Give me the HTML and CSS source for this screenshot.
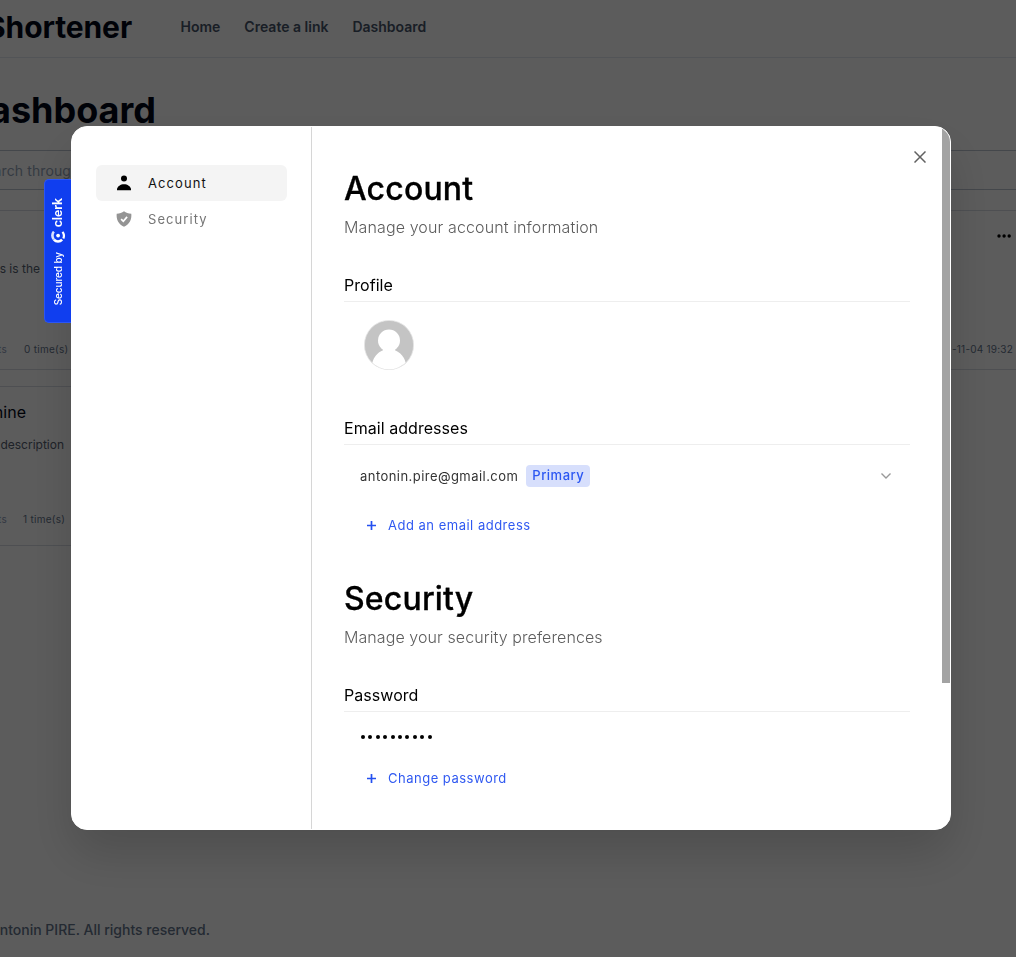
FILE: index.html
```html
<!DOCTYPE html>
<html lang="en">
<head>
<meta charset="utf-8">
<title>Dashboard - Shortener</title>
<link rel="stylesheet" href="styles.css">
</head>
<body>
<div class="page">
  <header class="topbar">
    <div class="brand">Shortener</div>
    <nav class="nav"><a>Home</a><a>Create a link</a><a>Dashboard</a></nav>
  </header>
  <main class="main">
    <h1 class="title">Dashboard</h1>
    <div class="search"><span class="to-left search-text">Search throug</span></div>
    <div class="cards">
      <article class="card">
        <div class="to-left card-title"></div>
        <div class="to-left card-desc w40">This is the</div>
        <div class="card-foot"><span class="to-left card-link">Stats</span><span class="foot-a">0 time(s)</span></div>
      </article>
      <article class="card card-right">
        <svg class="dots" width="14" height="4" viewBox="0 0 14 4"><circle cx="2" cy="2" r="1.7"/><circle cx="7.1" cy="2" r="1.7"/><circle cx="12.2" cy="2" r="1.7"/></svg>
        <div class="date">-11-04 19:32</div>
      </article>
      <article class="card">
        <div class="to-left card-title">mine</div>
        <div class="to-left card-desc w64">description</div>
        <div class="card-foot short"><span class="to-left card-link">Stats</span><span class="foot-b">1 time(s)</span></div>
      </article>
    </div>
  </main>
  <footer class="footer"><span class="to-left footer-text">Antonin PIRE. All rights reserved.</span></footer>
</div>
<div class="backdrop">
  <div class="modal">
    <div class="badge">
      <span class="badge-text">Secured by</span>
      <svg class="badge-logo" width="14" height="12" viewBox="0 0 14 12" fill="none" stroke="#fff"><path d="M2.900.7C.9 2.700.9 6.400 2.900 8.400" stroke-width="2.600" opacity=".85"/><path d="M2.900 8.600c2.200 2.500 6 2.500 8.200 0" stroke-width="2.500"/><path d="M11.500.9c1.600 2 1.700 4.600.8 6.600" stroke-width="2.200"/><circle cx="7.100" cy="4.600" r="1.900" fill="#fff" stroke="none"/></svg>
      <span class="badge-word">clerk</span>
    </div>
    <aside class="sidebar">
      <div class="side-item active">
        <svg width="16" height="16" viewBox="0 0 16 16"><circle cx="8" cy="3.600" r="3"/><path d="M1 15.300v-1.300C1.500 11.300 4.500 9.200 8 9.200s6.500 2.100 7 4.800v1.300z"/></svg>
        <span>Account</span>
      </div>
      <div class="side-item">
        <svg width="16" height="16" viewBox="0 0 16 16"><path fill="#949494" d="M8 .3c2 1.400 4.300 2.200 7.300 2.400.6 5.800-1.700 10.400-7.300 13C2.400 13.100.1 8.500.7 2.700 3.700 2.500 6 1.700 8 .3z"/><path d="M5.100 8.200l2.200 2 3.800-4.300" fill="none" stroke="#fff" stroke-width="1.700"/></svg>
        <span>Security</span>
      </div>
    </aside>
    <div class="content">
      <h2 class="heading">Account</h2>
      <p class="sub">Manage your account information</p>
      <h3 class="section">Profile</h3>
      <div class="profile">
        <svg width="50" height="50" viewBox="0 0 50 50"><defs><clipPath id="c"><circle cx="25" cy="25" r="24.300"/></clipPath></defs><circle cx="25" cy="25" r="24.600" fill="#c4c4c4" stroke="#e6e6e6" stroke-width=".8"/><g clip-path="url(#c)" fill="#fff"><ellipse cx="25" cy="20.500" rx="11" ry="10.900"/><path d="M19 28h12v2.300c5.500 2.200 9.300 6.700 10.700 12.700V50H8.300V43C9.700 37 13.500 32.500 19 30.300z"/></g></svg>
      </div>
      <h3 class="section">Email addresses</h3>
      <div class="email-row">
        <span class="email">antonin.pire@gmail.com</span><span class="tag">Primary</span>
        <svg class="chev" width="10" height="6" viewBox="0 0 10 6"><path d="M.5.6L5 5 9.500.6" fill="none" stroke="#999" stroke-width="1.400"/></svg>
      </div>
      <div class="action"><svg width="9" height="9" viewBox="0 0 9 9"><path d="M4.500 0v9M0 4.500h9" stroke="#2450f0" stroke-width="1.700"/></svg><span>Add an email address</span></div>
      <h2 class="heading second">Security</h2>
      <p class="sub sub-b">Manage your security preferences</p>
      <h3 class="section">Password</h3>
      <div class="pw"><i></i><i></i><i></i><i></i><i></i><i></i><i></i><i></i><i></i><i></i></div>
      <div class="action"><svg width="9" height="9" viewBox="0 0 9 9"><path d="M4.500 0v9M0 4.500h9" stroke="#2450f0" stroke-width="1.700"/></svg><span>Change password</span></div>
    </div>
    <div class="track"><div class="thumb"></div></div>
    <svg class="close" width="12" height="12" viewBox="0 0 12 12"><path d="M.5.5l11 11M11.500.5l-11 11" stroke="#616161" stroke-width="1.500"/></svg>
  </div>
</div>
</body>
</html>
```
FILE: styles.css
```css
* { box-sizing: border-box; }
body { margin: 0; font-family: Inter, "Liberation Sans", sans-serif; background: #fff; }
h1, h2, h3, p { margin: 0; }
.page { width: 1016px; height: 957px; overflow: hidden; display: flex; flex-direction: column; color: #020817; }
.to-left, .brand, .title { display: flex; justify-content: flex-end; white-space: nowrap; }
.topbar { height: 58px; flex: none; border-bottom: 1px solid #e2e8f0; display: flex; align-items: center; padding-bottom: 3px; }
.brand { width: 132px; font-size: 30px; font-weight: 700; letter-spacing: -.1px; }
.nav { display: flex; gap: 24px; margin: 0 0 2px 48.500px; font-size: 14px; font-weight: 600; color: #475569; }
.main { flex: 1; }
.title { width: 156px; margin-top: 32px; font-size: 36px; line-height: 40px; font-weight: 700; }
.search { height: 40px; margin: 20px -10px 0; padding: 0 10px; border: 1px solid #bcc4d0; display: flex; align-items: center; }
.search-text { width: 70px; font-size: 14px; letter-spacing: .1px; color: #94a3b8; }
.cards { margin-top: 20px; display: grid; grid-template-columns: 1fr 1fr; grid-auto-rows: 160px; gap: 16px; }
.card { border: 1px solid #d8dce4; border-width: 1px 0; padding-top: 13px; }
.card-title { width: 26px; height: 24px; font-size: 16px; line-height: 24px; }
.card-desc { font-size: 12px; line-height: 16px; margin-top: 13px; color: #556070; }
.w40 { width: 40px; }
.w64 { width: 64px; }
.card-foot { display: flex; margin-top: 65px; font-size: 10px; line-height: 14px; letter-spacing: .28px; color: #64748b; }
.card-foot.short { margin-top: 59px; }
.card-link { width: 7px; color: #8d9bb8; }
.foot-a { margin-left: 17px; }
.foot-b { margin-left: 16px; }
.card-right { display: flex; flex-direction: column; align-items: flex-end; justify-content: space-between; padding: 23px 3px 13px 0; }
.dots { margin-right: 2px; }
.date { white-space: nowrap; font-size: 10px; line-height: 14px; letter-spacing: .22px; color: #64748b; }
.footer { height: 54px; padding-top: 16px; flex: none; }
.footer-text { width: 210px; font-size: 14px; line-height: 22px; font-weight: 500; color: #64748b; }

.backdrop { position: fixed; inset: 0; background: rgba(0, 0, 0, .64); padding: 126px 65px 0 71px; }
.modal { position: relative; width: 880px; height: 704px; border-radius: 16px; border: 1px solid #fff; background: #fff; box-shadow: 0 24px 48px rgba(0, 0, 0, .16); display: flex; color: #000; }
.badge { position: absolute; left: -28px; top: 52px; width: 27px; height: 144px; background: #103eef; border: 1px solid #2b55f5; border-right: 0; border-radius: 5px 0 0 5px; display: flex; flex-direction: column-reverse; align-items: center; padding: 16px 1px 17px 0; color: #fff; }
.badge-text, .badge-word { writing-mode: vertical-rl; transform: rotate(180deg); line-height: 14px; white-space: nowrap; flex: none; }
.badge-text { font-size: 10px; font-weight: 550; letter-spacing: -.1px; }
.badge-word { font-size: 12.500px; font-weight: 600; letter-spacing: -.2px; }
.badge-logo { flex: none; margin: 4px 0 9px; }
.sidebar { width: 240px; border-right: 1px solid #d6d6d6; padding: 38px 24px; }
.side-item { height: 36px; border-radius: 6px; display: flex; align-items: center; gap: 16px; padding-left: 20px; font-size: 13px; letter-spacing: 1.080px; font-weight: 400; color: #757575; }
.side-item.active { background: #f4f4f4; color: #111; }
.content { width: 598px; padding: 42px 0 0 32px; }
.heading { font-size: 32px; line-height: 40px; font-weight: 500; letter-spacing: .18px; -webkit-text-stroke: .3px #000; }
.sub { font-size: 16px; line-height: 24px; margin-top: 6px; font-weight: 300; letter-spacing: .12px; color: #5c5c5c; }
.sub-b { letter-spacing: .08px; }
.section { width: 566px; height: 31px; margin-top: 32px; font-size: 16px; line-height: 24px; font-weight: 400; padding-top: 2px; letter-spacing: .05px; border-bottom: 1px solid #eee; }
.profile { height: 80px; padding: 18px 20px; }
.email-row { height: 62px; display: flex; align-items: center; padding-left: 16px; font-size: 13px; letter-spacing: .450px; color: #333; }
.tag { height: 22px; line-height: 21px; margin-left: 8px; padding: 0 6px; border-radius: 4px; background: #d7dffc; color: #2c57f2; font-weight: 500; letter-spacing: .5px; }
.chev { margin-left: auto; margin-right: 19px; }
.action { height: 36px; display: flex; align-items: center; gap: 12px; padding-left: 23px; font-size: 13px; letter-spacing: .500px; color: #3059f1; }
.second { margin-top: 36px; }
.pw { height: 48px; display: flex; gap: 3.400px; padding: 23px 0 0 17px; }
.pw i { width: 4px; height: 4px; border-radius: 50%; background: #000; }
.track { position: absolute; right: 0; top: 0; width: 30px; height: 702px; border-radius: 0 15px 15px 0; overflow: hidden; pointer-events: none; }
.thumb { width: 8px; height: 556px; margin-left: 22px; background: #a3a3a3; }
.close { position: absolute; left: 842px; top: 24px; }
```
